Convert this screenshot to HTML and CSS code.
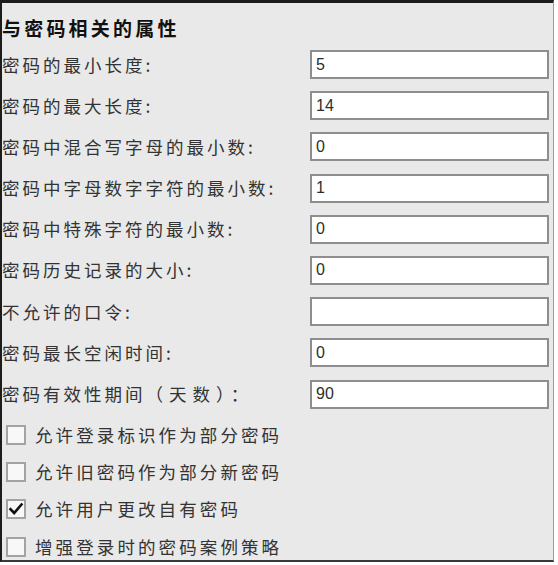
FILE: index.html
```html
<!DOCTYPE html>
<html lang="zh-CN">
<head>
<meta charset="utf-8">
<title>与密码相关的属性</title>
<link rel="stylesheet" href="styles.css">
</head>
<body>
<div class="panel">
  <h1 class="title">与密码相关的属性</h1>
  <div class="fields">
    <label class="field-label">密码的最小长度:</label><input class="field-input" value="5">
    <label class="field-label">密码的最大长度:</label><input class="field-input" value="14">
    <label class="field-label">密码中混合写字母的最小数:</label><input class="field-input" value="0">
    <label class="field-label">密码中字母数字字符的最小数:</label><input class="field-input" value="1">
    <label class="field-label">密码中特殊字符的最小数:</label><input class="field-input" value="0">
    <label class="field-label">密码历史记录的大小:</label><input class="field-input" value="0">
    <label class="field-label">不允许的口令:</label><input class="field-input" value="">
    <label class="field-label">密码最长空闲时间:</label><input class="field-input" value="0">
    <label class="field-label">密码有效性期间<span class="unit">（天数）：</span></label><input class="field-input" value="90">
  </div>
  <div class="checks">
    <div class="check"><span class="box"></span><span class="check-text">允许登录标识作为部分密码</span></div>
    <div class="check"><span class="box"></span><span class="check-text">允许旧密码作为部分新密码</span></div>
    <div class="check"><span class="box"><svg class="tick" viewBox="0 0 16 16" width="16" height="16"><path d="M2.5 8.2 L6.2 12 L13.5 3.5" fill="none" stroke="#111" stroke-width="2.6" stroke-linecap="square"/></svg></span><span class="check-text">允许用户更改自有密码</span></div>
    <div class="check"><span class="box"></span><span class="check-text">增强登录时的密码案例策略</span></div>
  </div>
</div>
</body>
</html>
```
FILE: styles.css
```css
html, body {
  margin: 0;
  padding: 0;
  background: #ffffff;
}

body {
  width: 558px;
  height: 565px;
  overflow: hidden;
  font-family: "Noto Sans CJK SC", "Liberation Sans", sans-serif;
}

.panel {
  box-sizing: border-box;
  width: 554px;
  height: 562px;
  background: #e9e9e9;
  border-top: 3px solid #1c1c1c;
  border-left: 2px solid #1c1c1c;
  border-right: 1px solid #9c9c9c;
  border-bottom: 2px solid #3a3a3a;
  padding: 0 4px 0 0;
  display: flex;
  flex-direction: column;
}

.title {
  margin: 14px 0 0 0;
  font-size: 19px;
  line-height: 21px;
  font-weight: bold;
  letter-spacing: 3.2px;
  color: #111;
}

.fields {
  margin-top: 12px;
  display: grid;
  grid-template-columns: 1fr 239px;
  grid-auto-rows: 29px;
  row-gap: 12.2px;
  align-items: center;
}

.field-label {
  font-size: 17.5px;
  line-height: 20px;
  letter-spacing: 3px;
  color: #333333;
  white-space: nowrap;
}

.unit {
  letter-spacing: 6px;
}

.field-input {
  box-sizing: border-box;
  width: 239px;
  height: 29px;
  margin: 0;
  border: 2px solid #8e8e8e;
  background: #ffffff;
  padding: 0 4px;
  font-family: "Liberation Sans", Arial, sans-serif;
  font-size: 16px;
  color: #2e2e2e;
  outline: none;
}

.checks {
  margin-top: 16.4px;
  display: flex;
  flex-direction: column;
  gap: 17.3px;
}

.check {
  display: flex;
  align-items: center;
  height: 20px;
  padding-left: 4px;
}

.box {
  box-sizing: border-box;
  width: 20px;
  height: 20px;
  border: 2px solid #a3a3a3;
  background: #f8f8f8;
  display: flex;
  align-items: center;
  justify-content: center;
  flex: none;
}

.tick {
  display: block;
}

.check-text {
  margin-left: 9px;
  font-size: 17.5px;
  line-height: 20px;
  letter-spacing: 3.1px;
  color: #333333;
  white-space: nowrap;
}
```
